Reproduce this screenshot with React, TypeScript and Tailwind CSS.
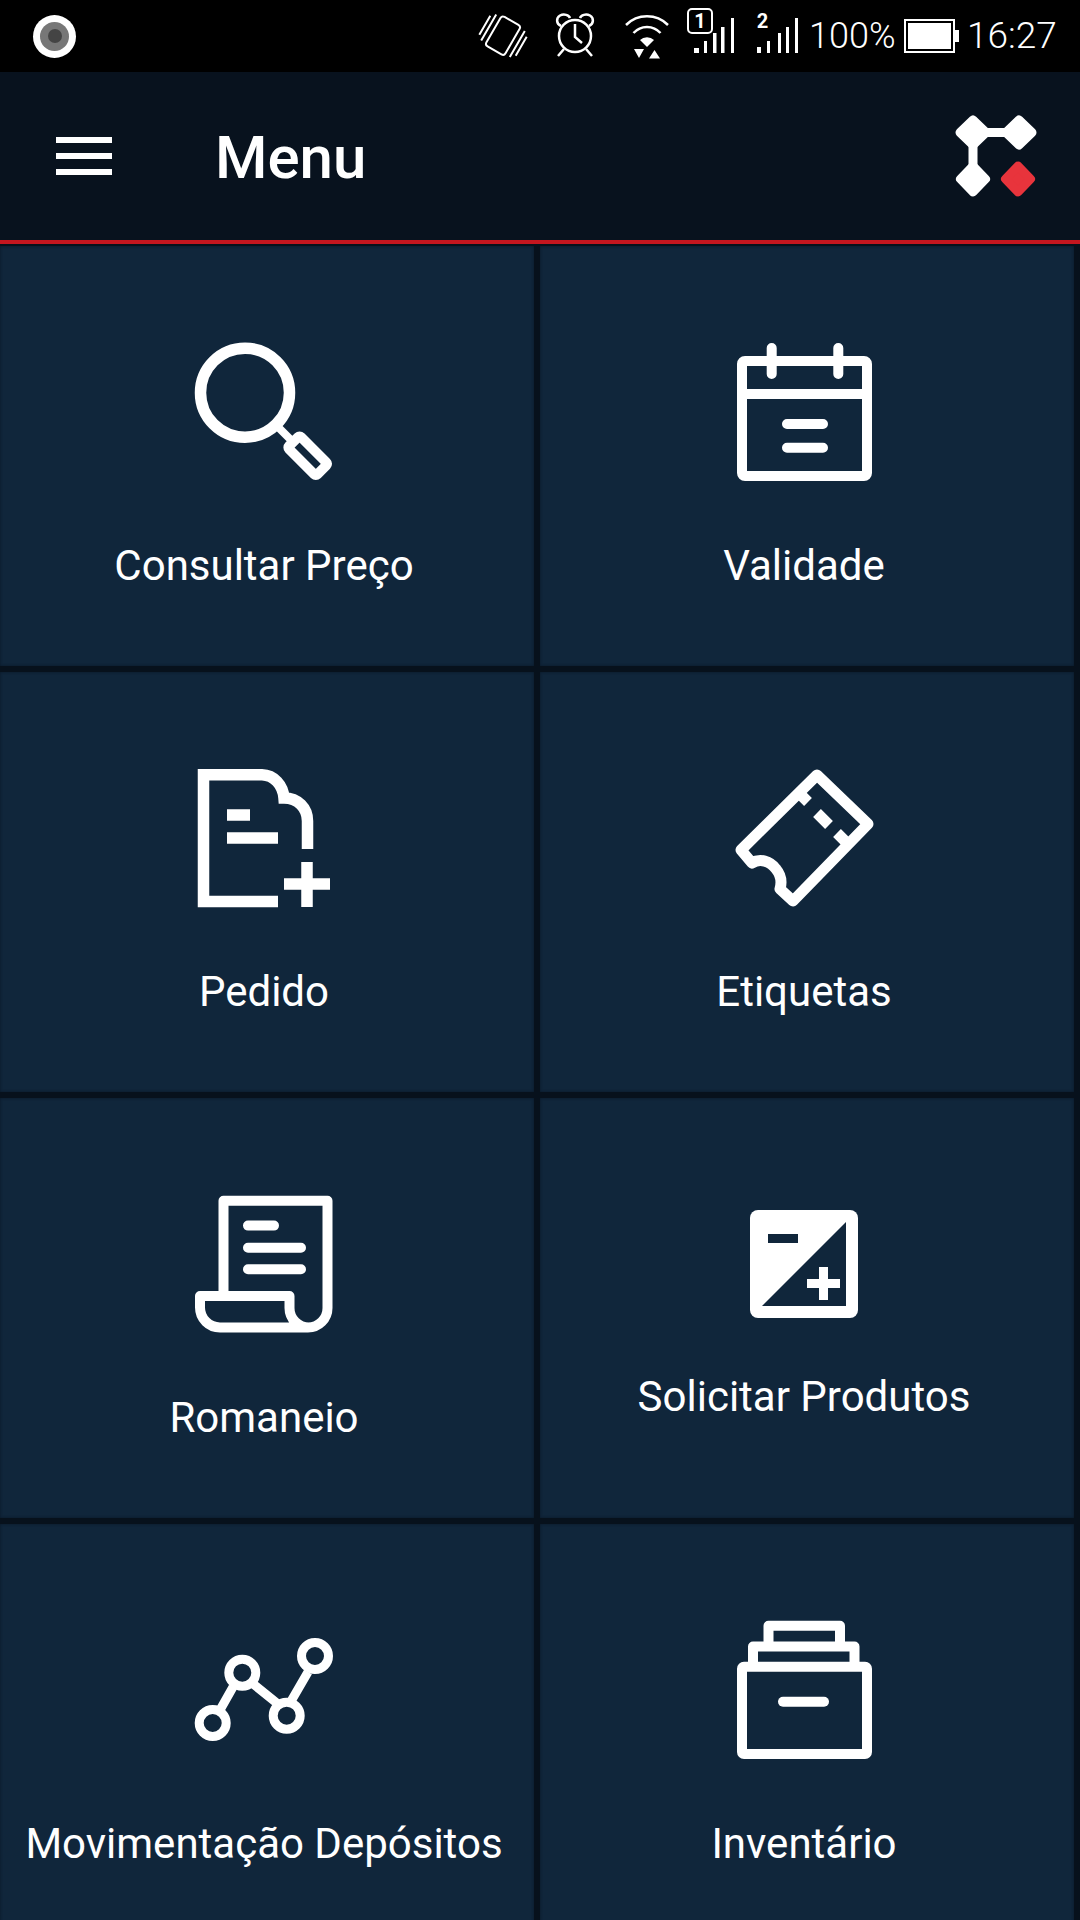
import type { ReactNode } from 'react';

const NAVY = '#10263b';

// Tile icons share one 180 box, viewBox y shifts each row onto its pixel row
const Icon = ({ y, children }: { y: number; children: ReactNode }) => (
    <svg
        viewBox={`4 ${y} 180 180`}
        width={180}
        height={180}
        fill="none"
        stroke="#fff"
        strokeWidth={10}
        className="block shrink-0"
    >
        {children}
    </svg>
);

const SearchIcon = () => (
    <Icon y={0}>
        <circle cx={75} cy={72.7} r={44.5} strokeWidth={11.5} />
        <path d="M106 105L126 125" strokeWidth={8} />
        <rect x={-20} y={-8.5} width={40} height={17} rx={2} strokeWidth={10} strokeLinejoin="round" transform="translate(137.7 135.7) rotate(45)" />
    </Icon>
);

const CalendarIcon = () => (
    <Icon y={0}>
        <rect x={32} y={41} width={125} height={115} rx={3} strokeLinejoin="round" />
        <path d="M32 74H157" />
        <path d="M61.7 28V54M128.3 28V54M77 104H113M77 127.7H113" strokeLinecap="round" />
    </Icon>
);

const OrderIcon = () => (
    <Icon y={1}>
        <g strokeWidth={11.5}>
            <path d="M108 156.5H33.5V29.7H92C104 30 113 40 114 53C128 53 137.5 63 137.5 76V104" />
            <path d="M57 70H80M57 93H108M137 117V162M114 139H160" />
        </g>
    </Icon>
);

const TicketIcon = () => (
    <Icon y={1}>
        <path
            d="M107 30L158 79L83 156L70 144C72 137 71 130 66 124C60 116 50 113 42 118L31 105Z"
            strokeWidth={11}
            strokeLinejoin="round"
        />
        <path d="M88 47L98 57M107 68L119 80M127 88L137 98" strokeWidth={11} />
    </Icon>
);

const ScrollIcon = () => (
    <Icon y={2}>
        <g strokeLinejoin="round">
            <path d="M53.5 126V30.8H157.5V138A19.5 19.5 0 0 1 138 157.5H50A20 20 0 0 1 30 137.5V126H119.5V138A19.5 19.5 0 0 0 139 157.5" />
            <path d="M78 55.6H104M78 77.7H131M78 99.3H131" strokeLinecap="round" />
        </g>
    </Icon>
);

const ExposureIcon = () => (
    <Icon y={2}>
        <g stroke="none">
            <rect x={40} y={40} width={108} height={108} rx={8} fill="#fff" />
            <path d="M136 52V136H52Z" fill={NAVY} />
            <rect x={58} y={64} width={30} height={9} fill={NAVY} />
            <path d="M97 109H109V97H118V109H130V118H118V130H109V118H97Z" fill="#fff" />
        </g>
    </Icon>
);

const GraphIcon = () => (
    <Icon y={-2}>
        <g strokeWidth={9}>
            <circle cx={42.7} cy={123} r={13.5} />
            <circle cx={72.3} cy={72.7} r={13.5} />
            <circle cx={116.7} cy={115.7} r={13.5} />
            <circle cx={145} cy={56} r={13.5} />
            <path d="M50 110L63 87M82 83L108 104M120 103L138 72" />
        </g>
    </Icon>
);

const ArchiveIcon = () => (
    <Icon y={-2}>
        <g strokeLinejoin="round">
            <rect x={32} y={66.7} width={125} height={87.3} rx={2} />
            <path d="M43 66.7V46.5H144.5V66.7M58.5 46.5V25.7H130V46.5" />
            <path d="M73 101.7H114" strokeLinecap="round" />
        </g>
    </Icon>
);

const tiles = [
    { label: 'Consultar Preço', icon: <SearchIcon /> },
    { label: 'Validade', icon: <CalendarIcon /> },
    { label: 'Pedido', icon: <OrderIcon /> },
    { label: 'Etiquetas', icon: <TicketIcon /> },
    { label: 'Romaneio', icon: <ScrollIcon /> },
    { label: 'Solicitar Produtos', icon: <ExposureIcon />, short: true },
    { label: 'Movimentação Depósitos', icon: <GraphIcon /> },
    { label: 'Inventário', icon: <ArchiveIcon /> },
];

const Tile = ({ label, icon, short }: { label: string; icon: ReactNode; short?: boolean }) => (
    <div className="flex h-[420px] flex-col items-center bg-[#10263b] pr-[6px] pt-[74px] shadow-[inset_0_0_3px_#0a1727]">
        {icon}
        <span className={`${short ? 'mt-[21px]' : 'mt-[42px]'} text-[42px] leading-[48px] whitespace-nowrap text-white`}>
            {label}
        </span>
    </div>
);

// Phone status icons, drawn in page pixels
const StatusIcons = () => (
    <svg viewBox="470 0 339 72" width={339} height={72} fill="none" stroke="#fff" strokeWidth={2} className="block shrink-0">
        {/* vibrate */}
        <g transform="translate(503 35.700) rotate(30)">
            <rect x={-11} y={-17} width={22} height={34} rx={3} />
            <path d="M-16.500 -15V15M-21 -11V11M16.500 -15V15M21 -11V11" />
        </g>
        {/* alarm */}
        <circle cx={575} cy={36} r={16} strokeWidth={2.500} />
        <path d="M575 24V37L582 43M561 26C556 24 556 18 560 15.500C564 13.500 569 15 570 18M589 26C594 24 594 18 590 15.500C586 13.500 581 15 580 18M564 49L558 56M586 49L592 56" strokeWidth={2.500} />
        {/* wifi */}
        <path d="M626 25A29.700 29.700 0 0 1 668 25M633.500 33A18 18 0 0 1 660.500 33" strokeWidth={2.500} />
        <g fill="#fff" stroke="none">
            <path d="M640 40A10 10 0 0 1 654 40L647 47Z" />
            <path d="M634 49H644L639 58ZM654.500 50L660 58.500H649Z" />
        </g>
        {/* sim 1 */}
        <rect x={688} y={9} width={24} height={24} rx={4} />
        <text x={700} y={28} textAnchor="middle" fill="#fff" stroke="none" fontFamily="Roboto, sans-serif" fontWeight={700} fontSize={20}>1</text>
        <text x={762.500} y={28} textAnchor="middle" fill="#fff" stroke="none" fontFamily="Roboto, sans-serif" fontWeight={700} fontSize={20}>2</text>
        <g fill="#fff" stroke="none">
            <rect x={694} y={48} width={5} height={5} />
            <rect x={704} y={41} width={3} height={12} />
            <rect x={713} y={33} width={3.500} height={20} />
            <rect x={721} y={27} width={3.500} height={26} />
            <rect x={731} y={18} width={3} height={35} />
            <rect x={757} y={47} width={4} height={6} />
            <rect x={767} y={41} width={3} height={12} />
            <rect x={778} y={33} width={3} height={20} />
            <rect x={786} y={27} width={3} height={26} />
            <rect x={795} y={18} width={3} height={35} />
        </g>
    </svg>
);

const Battery = () => (
    <svg viewBox="0 0 55 34" width={55} height={34} className="block shrink-0">
        <rect x={1} y={1} width={49} height={32} fill="none" stroke="#fff" strokeWidth={2} />
        <rect x={4} y={4} width={43} height={26} fill="#fff" />
        <rect x={51} y={11} width={4} height={12} fill="#fff" />
    </svg>
);

const Logo = () => (
    <svg viewBox="950 112 90 88" width={90} height={88} className="block shrink-0">
        <path d="M973 132.500H1019M973 132.500V179" stroke="#fff" strokeWidth={9} fill="none" />
        <g fill="#fff" stroke="#fff" strokeWidth={9} strokeLinejoin="round">
            <path d="M973 120L986 132.500L973 145L960 132.500Z" />
            <path d="M1019 120L1032 132.500L1019 145L1006 132.500Z" />
            <path d="M973 166L985.500 179L973 192L960.500 179Z" />
        </g>
        <path d="M1018 166L1030.500 179L1018 192L1005.500 179Z" fill="#e8343c" stroke="#e8343c" strokeWidth={9} strokeLinejoin="round" />
    </svg>
);

export default function App() {
    return (
        <div className="h-[1920px] w-[1080px] overflow-hidden bg-[#07111c] font-['Roboto',sans-serif]">
            {/* Status bar */}
            <div className="flex h-[72px] items-center bg-black pl-[33px] pr-[25px]">
                <div className="flex h-[43px] w-[43px] items-center justify-center rounded-full bg-white">
                    <div className="flex h-[29px] w-[29px] items-center justify-center rounded-full bg-[#777777]">
                        <div className="h-[14px] w-[14px] rounded-full bg-[#444444]" />
                    </div>
                </div>
                <div className="ml-auto flex items-center text-[36px] leading-[72px] font-light text-white">
                    <StatusIcons />
                    <span className="w-[95px]">100%</span>
                    <Battery />
                    <span className="ml-[8px] w-[88px] text-[37px]">16:27</span>
                </div>
            </div>

            {/* Header */}
            <div className="flex h-[168px] items-center bg-[#08121e] pl-[56px] pr-[40px]">
                <div className="flex w-[56px] flex-col gap-[10px]">
                    <div className="h-[6px] bg-white" />
                    <div className="h-[6px] bg-white" />
                    <div className="h-[6px] bg-white" />
                </div>
                <h1 className="ml-[103px] mt-[4px] text-[60px] leading-[64px] font-medium text-white">Menu</h1>
                <div className="ml-auto">
                    <Logo />
                </div>
            </div>
            <div className="h-[4px] bg-[#c4161f]" />

            {/* Tiles */}
            <div className="grid grid-cols-2 gap-[6px] pr-[6px] pt-[2px]">
                {tiles.map((tile) => (
                    <Tile key={tile.label} {...tile} />
                ))}
            </div>
        </div>
    );
}
